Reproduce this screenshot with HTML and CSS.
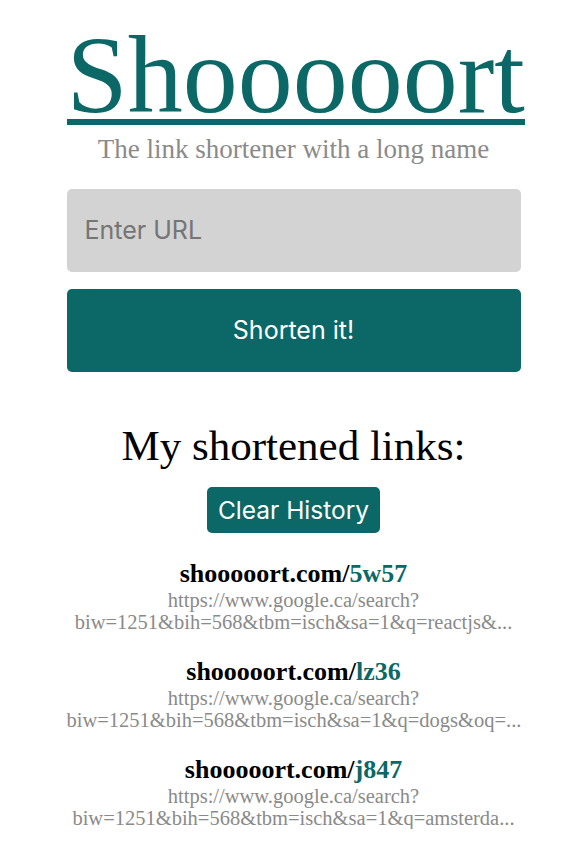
FILE: index.html
```html
<!DOCTYPE html>
<html>
<head>
<meta charset="utf-8">
<title>Shooooort</title>
<link rel="stylesheet" href="styles.css">
</head>
<body>
<main class="page">
  <header class="header">
    <h1 class="title">Shooooort</h1>
    <p class="subtitle">The link shortener with a long name</p>
  </header>
  <form class="form">
    <input class="url-input" type="text" placeholder="Enter URL">
    <button class="shorten-btn" type="button">Shorten it!</button>
  </form>
  <section class="history">
    <h2 class="history-title">My shortened links:</h2>
    <button class="clear-btn" type="button">Clear History</button>
    <ul class="links">
      <li class="link-item">
        <div class="short">shooooort.com/<span class="code">5w57</span></div>
        <div class="original">https://www.google.ca/search?<br>biw=1251&amp;bih=568&amp;tbm=isch&amp;sa=1&amp;q=reactjs&amp;...</div>
      </li>
      <li class="link-item">
        <div class="short">shooooort.com/<span class="code">lz36</span></div>
        <div class="original">https://www.google.ca/search?<br>biw=1251&amp;bih=568&amp;tbm=isch&amp;sa=1&amp;q=dogs&amp;oq=...</div>
      </li>
      <li class="link-item">
        <div class="short">shooooort.com/<span class="code">j847</span></div>
        <div class="original">https://www.google.ca/search?<br>biw=1251&amp;bih=568&amp;tbm=isch&amp;sa=1&amp;q=amsterda...</div>
      </li>
    </ul>
  </section>
</main>
</body>
</html>
```

FILE: styles.css
```css
html, body {
  margin: 0;
  padding: 0;
  background: #ffffff;
}

body {
  font-family: "Liberation Serif", "DejaVu Serif", serif;
  color: #000;
}

.page {
  width: 454px;
  margin: 0 auto;
  padding-left: 5px;
  text-align: center;
}

.header {
  padding-top: 33px;
}

.title {
  display: inline-block;
  margin: 0;
  font-family: "Liberation Serif", serif;
  font-weight: normal;
  font-size: 110px;
  line-height: 0.78;
  color: #0b6866;
  border-bottom: 6px solid #0b6866;
}

.subtitle {
  margin: 9px 0 0;
  font-size: 27px;
  line-height: 30px;
  color: #8a8a8a;
}

.form {
  display: flex;
  flex-direction: column;
  gap: 17px;
  margin-top: 25px;
}

.url-input,
.shorten-btn,
.clear-btn {
  font-family: "Inter", "Liberation Sans", sans-serif;
}

.url-input {
  box-sizing: border-box;
  height: 83px;
  width: 100%;
  padding: 0 18px;
  border: none;
  border-radius: 5px;
  background: #d3d3d3;
  font-size: 25px;
  color: #333;
  outline: none;
}

.url-input::placeholder {
  color: #757575;
}

.shorten-btn {
  height: 83px;
  width: 100%;
  border: none;
  border-radius: 5px;
  background: #0b6866;
  color: #fff;
  font-size: 25px;
}

.history {
  margin-top: 50px;
}

.history-title {
  margin: 0;
  font-weight: normal;
  font-size: 43px;
  line-height: 48px;
}

.clear-btn {
  margin-top: 17px;
  height: 46px;
  padding: 0 11px;
  border: none;
  border-radius: 5px;
  background: #0b6866;
  color: #fff;
  font-size: 24.5px;
}

.links {
  list-style: none;
  margin: 27px 0 0;
  padding: 0;
  display: flex;
  flex-direction: column;
  gap: 25px;
}

.short {
  font-weight: bold;
  font-size: 26px;
  line-height: 28px;
  margin-bottom: 1px;
}

.code {
  color: #0b6866;
}

.original {
  font-size: 20.5px;
  line-height: 22px;
  color: #8a8a8a;
  white-space: nowrap;
}
```
